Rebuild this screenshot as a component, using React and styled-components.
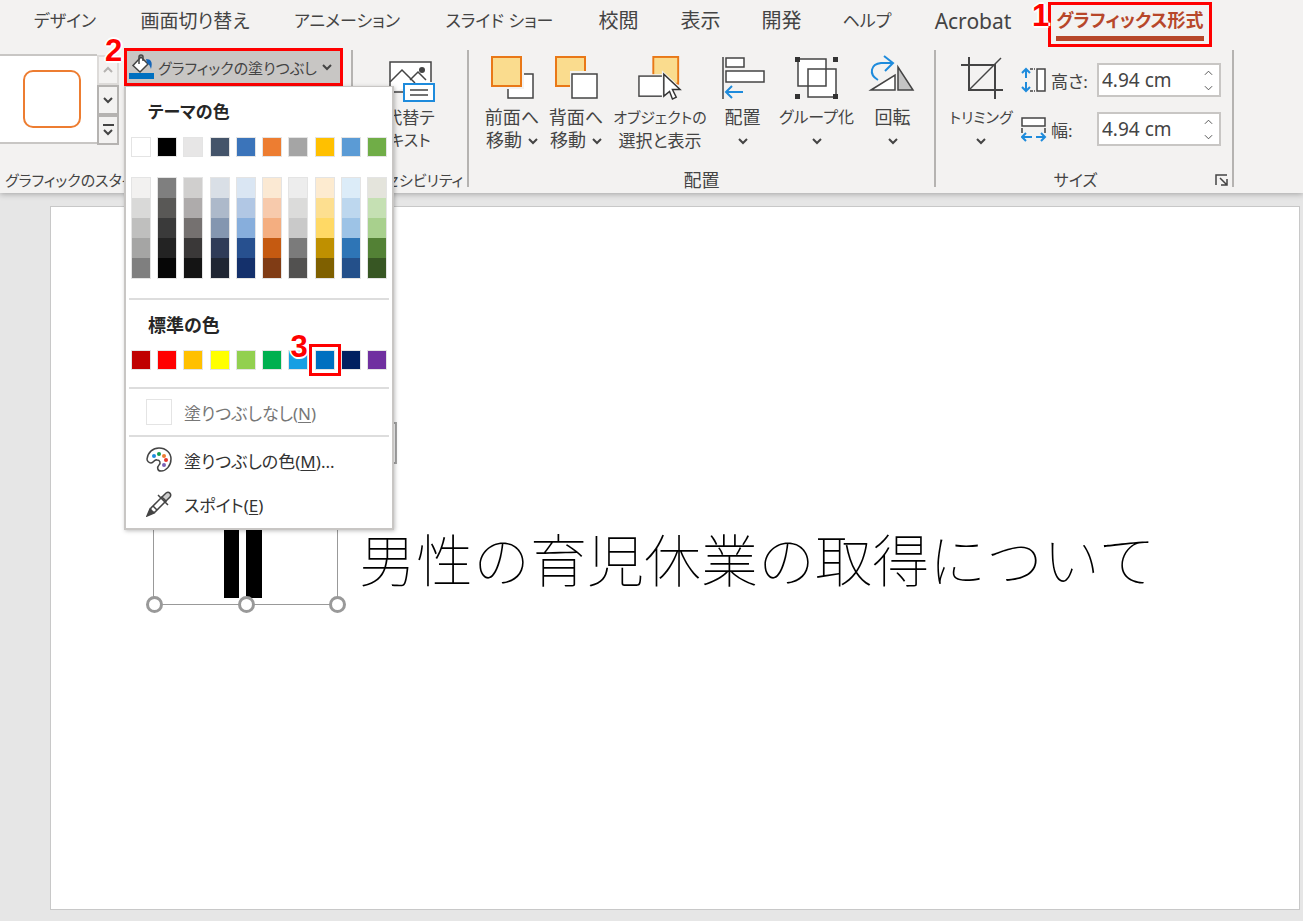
import React from 'react';
import styled, { createGlobalStyle } from 'styled-components';

const colors = {
  ribbon: '#f3f2f1',
  backdrop: '#e6e6e6',
  text: '#444444',
  line: '#b5b3b1',
  border: '#c8c6c4',
  accent: '#b7472a',
  blue: '#1e8bdc',
  mark: '#ff0000',
};

const tabs = [
  { label: 'デザイン', width: 106, size: 17 },
  { label: '画面切り替え', width: 154, size: 19 },
  { label: 'アニメーション', width: 150, size: 17 },
  { label: 'スライド ショー', width: 155, size: 17 },
  { label: '校閲', width: 83, size: 20 },
  { label: '表示', width: 81, size: 20 },
  { label: '開発', width: 81, size: 20 },
  { label: 'ヘルプ', width: 90, size: 17 },
  { label: 'Acrobat', width: 122 },
];

const themeColors = [
  ['#ffffff', '#f2f1f0', '#d9d9d8', '#bfbfbe', '#a5a5a4', '#7f7f7f'],
  ['#000000', '#7f7f7f', '#595856', '#3a3a3a', '#232323', '#060606'],
  ['#e7e6e6', '#d0cfce', '#aeabab', '#757170', '#3a3838', '#141414'],
  ['#44546a', '#d9dfe6', '#adb9ca', '#8496b0', '#2f3b57', '#1f2532'],
  ['#3b74ba', '#dae6f3', '#b1c7e4', '#87aedc', '#27508f', '#14306b'],
  ['#ed7d31', '#fbe9d3', '#f7caac', '#f4ae80', '#c55a11', '#803c15'],
  ['#a5a5a5', '#ededed', '#dbdbda', '#c9c9c9', '#7b7b7b', '#525150'],
  ['#ffc000', '#fdebd0', '#fddf90', '#ffd965', '#bf9000', '#7f6000'],
  ['#5b9bd5', '#dcecf8', '#bdd7ee', '#9dc3e6', '#2e75b6', '#24508a'],
  ['#70ad47', '#e4e4dc', '#c5e0b3', '#a8d08d', '#538135', '#375623'],
];

const standardColors = [
  '#c00000', '#ff0000', '#ffc000', '#ffff00', '#92d050',
  '#00b050', '#169fe3', '#0070c0', '#002060', '#7030a0',
];

const Chevron = ({ up }) => (
  <svg width="10" height="8" viewBox="0 0 10 8" fill="none" stroke="currentColor" strokeWidth="2">
    <path d={up ? 'M1 6l4-4 4 4' : 'M1 2l4 4 4-4'} />
  </svg>
);

const BucketIcon = () => (
  <svg width="26" height="26" viewBox="0 0 26 26" fill="none">
    <path d="M12 3L4 11.500l7 6.500 8-8z" fill="#fff" stroke="#444" strokeWidth="1.500" />
    <path d="M10 10V3a2 2 0 0 1 4 0v4" stroke="#444" strokeWidth="1.500" />
    <path d="M17 5c5 0 7 3 5 10-1-3-2-5-4-6z" fill="#1565b8" />
    <rect y="19" width="25" height="6" fill="#0070c0" />
  </svg>
);

const AltTextIcon = () => (
  <svg width="46" height="44" viewBox="0 0 46 44" fill="none" stroke="#444" strokeWidth="1.500">
    <path d="M3 36V6h41v20" fill="#fff" />
    <path d="M3 26l12-12 13 13M23 24l8-8 8 8M3 36h13" />
    <circle cx="35" cy="14" r="3" fill="#444" stroke="none" />
    <rect x="17" y="28" width="30" height="17" fill="#fff" stroke={colors.blue} strokeWidth="2" />
    <path d="M23 34h18M23 39h18" />
  </svg>
);

const BringForwardIcon = () => (
  <svg width="44" height="44" viewBox="0 0 44 44">
    <rect x="18" y="18" width="25" height="24" fill="#fff" stroke="#444" strokeWidth="1.500" />
    <rect x="0" y="0" width="34" height="33" fill={colors.ribbon} />
    <rect x="2" y="1" width="29" height="29" fill="#fadc8e" stroke="#e97817" strokeWidth="2" />
  </svg>
);

const SendBackwardIcon = () => (
  <svg width="44" height="44" viewBox="0 0 44 44">
    <rect x="2" y="1" width="29" height="29" fill="#fadc8e" stroke="#e97817" strokeWidth="2" />
    <rect x="16" y="15" width="28" height="28" fill={colors.ribbon} />
    <rect x="18" y="18" width="25" height="24" fill="#fff" stroke="#444" strokeWidth="1.500" />
  </svg>
);

const SelectionIcon = () => (
  <svg width="46" height="46" viewBox="0 0 46 46">
    <rect x="16" y="1" width="26" height="28" fill="#fadc8e" stroke="#e97817" strokeWidth="2" />
    <rect x="0" y="19" width="27" height="25" fill={colors.ribbon} />
    <rect x="1" y="21" width="25" height="21" fill="#fff" stroke="#444" strokeWidth="1.500" />
    <path d="M25 15v30l7-5 3 7 8-3-4-8h9z" fill={colors.ribbon} />
    <path d="M27 19v23l6-5 3 8 4-2-4-8h8z" fill="#fff" stroke="#333" strokeWidth="1.500" />
  </svg>
);

const AlignIcon = () => (
  <svg width="44" height="44" viewBox="0 0 44 44" fill="none" stroke="#444" strokeWidth="1.500">
    <path d="M2 1v42" />
    <rect x="5" y="2" width="18" height="9" fill="#fff" />
    <rect x="5" y="15" width="38" height="11" fill="#fff" />
    <path d="M22 36H5M11 30l-6 6 6 6" stroke={colors.blue} strokeWidth="2" />
  </svg>
);

const GroupIcon = () => (
  <svg width="44" height="44" viewBox="0 0 44 44" fill="none" stroke="#444" strokeWidth="1.500">
    <rect x="3" y="3" width="28" height="27" fill="#fff" />
    <rect x="13" y="13" width="28" height="28" fill="#fff" />
    <path d="M13 30h18V13" />
    <path d="M0 1h5v5h-5zM38 1h5v5h-5zM0 38h5v5h-5zM38 38h5v5h-5z" fill="#333" stroke="none" />
  </svg>
);

const RotateIcon = () => (
  <svg width="46" height="44" viewBox="0 0 46 44" fill="none" stroke="#444" strokeWidth="1.500">
    <path d="M1 34L25 19v15z" fill="#fff" />
    <path d="M28 11v23h15z" fill="#c4c4c4" />
    <path d="M8 24C-2 18 1 8 11 7h12M14 0l9 7-8 8" stroke={colors.blue} strokeWidth="2" />
  </svg>
);

const CropIcon = () => (
  <svg width="44" height="44" viewBox="0 0 44 44" fill="none" stroke="#444" strokeWidth="2">
    <path d="M10 1v33h34M2 9h34v34" />
    <path d="M10 34L42 2" strokeWidth="1.500" />
  </svg>
);

const HeightIcon = () => (
  <svg width="26" height="26" viewBox="0 0 26 26" fill="none" stroke="#444" strokeWidth="1.500">
    <rect x="16" y="2" width="8" height="22" fill="#fff" />
    <path d="M9 2h5M9 24h5" strokeDasharray="3 1" />
    <path d="M5 2v9M5 15v9M1 6l4-4 4 4M1 20l4 4 4-4" stroke={colors.blue} strokeWidth="2" />
  </svg>
);

const WidthIcon = () => (
  <svg width="26" height="26" viewBox="0 0 26 26" fill="none" stroke="#444" strokeWidth="1.500">
    <rect x="1" y="2" width="23" height="8" fill="#fff" />
    <path d="M1 12v5M24 12v5" />
    <path d="M2 21h9M15 21h9M5 17l-4 4 4 4M20 17l4 4-4 4" stroke={colors.blue} strokeWidth="2" />
  </svg>
);

const LauncherIcon = () => (
  <svg width="14" height="14" viewBox="0 0 14 14" fill="none" stroke="#444" strokeWidth="1.500">
    <path d="M1 12V2h11M5 5l7 7M12 6v6H6" />
  </svg>
);

const PaletteIcon = () => (
  <svg width="26" height="26" viewBox="0 0 26 26" fill="none">
    <path
      d="M1 12C2 5 7 1 13 1c7 0 12 5 12 11 0 7-5 12-10 12-4 0-4-4-2-6s1-5-2-5c-3-1-3 3-6 3-2 0-4-2-4-4z"
      fill="#fff"
      stroke="#444"
      strokeWidth="1.500"
    />
    <circle cx="8" cy="9" r="2" fill="#1e8bdc" />
    <circle cx="13" cy="7" r="2" fill="#14a052" />
    <circle cx="18" cy="9" r="2" fill="#ed7d31" />
    <circle cx="20" cy="13" r="2" fill="#e8352b" />
    <circle cx="18" cy="18" r="2" fill="#7b62b5" />
  </svg>
);

const EyedropperIcon = () => (
  <svg width="26" height="26" viewBox="0 0 26 26" fill="none" stroke="#444" strokeWidth="1.500">
    <path d="M3 23l2-6L16 6l4 4L9 21z" fill="#fff" />
    <path d="M16 6l4-4c3-2 6 1 4 4l-4 4z" fill="#ccc" />
    <path d="M12 4l10 10M7 15l4 4" />
    <path d="M1 25l3-7 4 4z" fill="#444" />
  </svg>
);

const arrangeButtons = [
  { lines: ['前面へ', '移動'], width: 64, Icon: BringForwardIcon },
  { lines: ['背面へ', '移動'], width: 64, Icon: SendBackwardIcon },
  { lines: ['オブジェクトの', '選択と表示'], sizes: [15, 17], plain: true, width: 104, Icon: SelectionIcon },
  { lines: ['配置'], width: 61, Icon: AlignIcon },
  { lines: ['グループ化'], sizes: [16], width: 87, Icon: GroupIcon },
  { lines: ['回転'], width: 65, Icon: RotateIcon },
];

const LargeCommand = ({ lines, sizes = [], plain, width, Icon }) => (
  <LargeButton type="button" $width={width}>
    <Icon />
    <CommandText>
      <CommandLine $size={sizes[0]}>{lines[0]}</CommandLine>
      <CommandLine $size={sizes[1]}>
        {lines[1]}
        {!plain && <Chevron />}
      </CommandLine>
    </CommandText>
  </LargeButton>
);

const SizeField = ({ id, label, Icon }) => (
  <>
    <FieldLabel htmlFor={id}>
      <Icon />
      {label}
    </FieldLabel>
    <Spinner>
      <SpinnerInput id={id} type="text" defaultValue="4.94 cm" />
      <SpinnerArrows>
        <SpinnerArrow type="button" aria-label={`${label} +`}><Chevron up /></SpinnerArrow>
        <SpinnerArrow type="button" aria-label={`${label} -`}><Chevron /></SpinnerArrow>
      </SpinnerArrows>
    </Spinner>
  </>
);

const FillMenu = () => (
  <Menu>
    <MenuHeading $size={17}>テーマの色</MenuHeading>
    <SwatchRow>
      {themeColors.map(([base]) => (
        <Swatch key={base} type="button" aria-label={base} $color={base} />
      ))}
    </SwatchRow>
    <ShadeRow>
      {themeColors.map(([base, ...shades]) => (
        <ShadeColumn key={base}>
          {shades.map(shade => (
            <Shade key={shade} type="button" aria-label={shade} $color={shade} />
          ))}
        </ShadeColumn>
      ))}
    </ShadeRow>
    <MenuRule />
    <MenuHeading>標準の色</MenuHeading>
    <StandardRow>
      {standardColors.map((color, index) => (
        <SwatchSlot key={color}>
          <Swatch type="button" aria-label={color} $color={color} />
          {index === 7 && <SwatchMark><StepNumber $left={-21} $top={-14}>3</StepNumber></SwatchMark>}
        </SwatchSlot>
      ))}
    </StandardRow>
    <MenuRule />
    <MenuItem type="button" $muted $height={46}>
      <EmptySwatch />
      <span>塗りつぶしなし(<u>N</u>)</span>
    </MenuItem>
    <MenuRule />
    <MenuItem type="button" $height={46}>
      <PaletteIcon />
      <span>塗りつぶしの色(<u>M</u>)...</span>
    </MenuItem>
    <MenuItem type="button" $height={42}>
      <EyedropperIcon />
      <span>スポイト(<u>E</u>)</span>
    </MenuItem>
  </Menu>
);

const App = () => (
  <Page>
    <GlobalStyle />
    <Ribbon>
      <TabBar>
        {tabs.map(({ label, width, size }) => (
          <Tab key={label} type="button" $width={width} $size={size}>{label}</Tab>
        ))}
        <TabMark>
          <StepNumber $left={-19} $top={-3}>1</StepNumber>
          <ActiveTab type="button" $width={148} $size={18}>グラフィックス形式</ActiveTab>
        </TabMark>
      </TabBar>
      <Groups>
        <Group $width={351}>
          <StyleTools>
            <Gallery><GalleryItem type="button" aria-label="スタイル" /></Gallery>
            <GalleryScroll>
              <ScrollButton type="button" aria-label="上へ" disabled><Chevron up /></ScrollButton>
              <ScrollButton type="button" aria-label="下へ"><Chevron /></ScrollButton>
              <ScrollButton type="button" aria-label="その他">
                <MoreBar />
                <Chevron />
              </ScrollButton>
            </GalleryScroll>
            <FillDropdown>
              <FillButton type="button">
                <BucketIcon />
                <FillLabel>グラフィックの塗りつぶし</FillLabel>
                <Chevron />
              </FillButton>
              <StepNumber $left={-19} $top={-11}>2</StepNumber>
              <FillMenu />
            </FillDropdown>
          </StyleTools>
          <GroupLabel $align="left" $size={15}>グラフィックのスタイル</GroupLabel>
        </Group>
        <Divider />
        <Group $width={114}>
          <CommandRow>
            <LargeCommand lines={['代替テ', 'キスト']} sizes={[17, 16]} plain width={114} Icon={AltTextIcon} />
          </CommandRow>
          <GroupLabel $align="right" $size={15}>アクセシビリティ</GroupLabel>
        </Group>
        <Divider />
        <Group $width={465}>
          <CommandRow $indent={11}>
            {arrangeButtons.map(button => <LargeCommand key={button.lines[0]} {...button} />)}
          </CommandRow>
          <GroupLabel>配置</GroupLabel>
        </Group>
        <Divider />
        <Group $width={296}>
          <CommandRow $indent={10}>
            <LargeCommand lines={['トリミング']} sizes={[15]} width={70} Icon={CropIcon} />
            <SizeGrid>
              <SizeField id="shape-height" label="高さ:" Icon={HeightIcon} />
              <SizeField id="shape-width" label="幅:" Icon={WidthIcon} />
            </SizeGrid>
          </CommandRow>
          <SizeFooter>
            <GroupLabel $size={16}>サイズ</GroupLabel>
            <Launcher type="button" aria-label="サイズと位置"><LauncherIcon /></Launcher>
          </SizeFooter>
        </Group>
        <Divider />
      </Groups>
    </Ribbon>
    <Workspace>
      <Slide>
        <PasteTag />
        <Selection>
          <Figure viewBox="0 0 183 183">
            <path d="M70 30h15v147h-15zM92 30h16v147h-16z" />
          </Figure>
          <Handle $x="0%" />
          <Handle $x="50%" />
          <Handle $x="100%" />
        </Selection>
        <SlideTitle>男性の育児休業の取得について</SlideTitle>
      </Slide>
    </Workspace>
  </Page>
);

const GlobalStyle = createGlobalStyle`
  * {
    box-sizing: border-box;
  }

  body {
    margin: 0;
    color: ${colors.text};
    font-family: "Noto Sans", "Noto Sans CJK JP", sans-serif;
    font-size: 18px;
    font-feature-settings: "palt";
  }

  button, input {
    margin: 0;
    padding: 0;
    border: 0;
    background: none;
    color: inherit;
    font: inherit;
    font-feature-settings: inherit;
  }

  svg {
    flex: none;
    display: block;
  }
`;

const Page = styled.div`
  display: flex;
  flex-direction: column;
  min-height: 100vh;
  overflow-x: hidden;
  background-color: ${colors.backdrop};
`;

const Ribbon = styled.header`
  position: relative;
  z-index: 1;
  padding-bottom: 3px;
  background-color: ${colors.ribbon};
  box-shadow: 0 1px 6px rgba(0, 0, 0, 0.3);
`;

const TabBar = styled.nav`
  display: flex;
  height: 48px;
  padding: 2px 0 0 12px;
`;

const Tab = styled.button`
  flex: none;
  width: ${props => props.$width}px;
  height: 38px;
  font-size: ${props => props.$size || 21}px;
  line-height: 38px;
  white-space: nowrap;
`;

const TabMark = styled.div`
  position: relative;
  height: 45px;
  margin-left: 14px;
  padding: 0 5px;
  border: 3px solid ${colors.mark};
`;

const ActiveTab = styled(Tab)`
  height: 36px;
  border-bottom: 5px solid ${colors.accent};
  color: ${colors.accent};
  font-weight: 700;
  line-height: 31px;
`;

const StepNumber = styled.span`
  position: absolute;
  left: ${props => props.$left}px;
  top: ${props => props.$top}px;
  color: ${colors.mark};
  font-family: "Liberation Sans", sans-serif;
  font-size: 31px;
  font-weight: 700;
  line-height: 28px;
  text-shadow: -2px 0 #fff, 2px 0 #fff, 0 -2px #fff, 0 2px #fff, 0 0 3px #fff;
`;

const Groups = styled.div`
  display: flex;
`;

const Group = styled.section`
  display: flex;
  flex: none;
  flex-direction: column;
  width: ${props => props.$width}px;
`;

const Divider = styled.div`
  flex: none;
  width: 2px;
  margin: 2px 0 3px;
  background-color: ${colors.line};
`;

const GroupLabel = styled.div`
  flex: 1;
  padding: 0 5px;
  font-size: ${props => props.$size || 18}px;
  line-height: 20px;
  text-align: ${props => props.$align || 'center'};
  white-space: nowrap;
`;

const StyleTools = styled.div`
  display: flex;
  align-items: flex-start;
  height: 122px;
`;

const Gallery = styled.div`
  display: flex;
  align-items: center;
  width: 97px;
  height: 90px;
  margin-top: 6px;
  padding-left: 23px;
  border: 1px solid ${colors.border};
  border-width: 2px 0;
  background-color: #fff;
`;

const GalleryItem = styled.button`
  width: 58px;
  height: 58px;
  border: 2px solid #ed7d31;
  border-radius: 10px;
`;

const GalleryScroll = styled.div`
  display: flex;
  flex-direction: column;
  width: 22px;
  margin: 7px 5px 0 0;
`;

const ScrollButton = styled.button`
  display: flex;
  flex-direction: column;
  align-items: center;
  justify-content: center;
  gap: 2px;
  height: 30px;
  border: 2px solid ${colors.line};

  &:disabled {
    border-color: #dddbd9;
    color: #b5b3b1;
  }
`;

const MoreBar = styled.span`
  width: 11px;
  height: 2px;
  background-color: currentColor;
`;

const FillDropdown = styled.div`
  position: relative;
`;

const FillButton = styled.button`
  display: flex;
  align-items: center;
  width: 219px;
  height: 38px;
  padding: 0 3px 0 2px;
  border: 3px solid ${colors.mark};
  background-color: ${colors.border};
  font-size: 15px;
  white-space: nowrap;
`;

const FillLabel = styled.span`
  margin: 0 5px 0 3px;
`;

const Menu = styled.div`
  position: absolute;
  top: 100%;
  left: 0;
  width: 270px;
  padding: 0 3px 3px;
  border: 2px solid ${colors.border};
  border-top-width: 1px;
  background-color: #fff;
  box-shadow: 1px 1px 4px rgba(0, 0, 0, 0.25);
`;

const MenuHeading = styled.h2`
  margin: 0;
  padding: 10px 0 10px 19px;
  color: #262626;
  font-size: ${props => props.$size || 18}px;
  font-weight: 700;
  line-height: 30px;
`;

const SwatchRow = styled.div`
  display: flex;
  justify-content: space-between;
  padding: 0 2px;
`;

const StandardRow = styled(SwatchRow)`
  margin-bottom: 17px;
`;

const Swatch = styled.button`
  display: block;
  width: 20px;
  height: 20px;
  border: 1px solid #e4e4e4;
  background-color: ${props => props.$color};
`;

const ShadeRow = styled(SwatchRow)`
  margin: 20px 0 19px;
`;

const ShadeColumn = styled.div`
  display: flex;
  flex-direction: column;
  width: 20px;
  border: 1px solid #e4e4e4;
`;

const Shade = styled.button`
  height: 20px;
  background-color: ${props => props.$color};
`;

const SwatchSlot = styled.div`
  position: relative;
`;

const SwatchMark = styled.div`
  position: absolute;
  inset: -6px;
  border: 3px solid ${colors.mark};
  pointer-events: none;
`;

const MenuRule = styled.hr`
  height: 2px;
  margin: 0;
  border: 0;
  background-color: #dddddd;
`;

const MenuItem = styled.button`
  display: flex;
  align-items: center;
  gap: 12px;
  width: 100%;
  height: ${props => props.$height}px;
  padding-left: 17px;
  color: ${props => props.$muted ? '#777777' : '#333333'};
  font-size: 17px;

  u {
    text-underline-offset: 2px;
  }
`;

const EmptySwatch = styled.span`
  width: 26px;
  height: 26px;
  border: 1px solid #e4e4e4;
`;

const CommandRow = styled.div`
  display: flex;
  height: 122px;
  padding: 8px 0 0 ${props => props.$indent || 0}px;
`;

const LargeButton = styled.button`
  display: flex;
  flex: none;
  flex-direction: column;
  align-items: center;
  gap: 6px;
  width: ${props => props.$width}px;

  > svg {
    height: 44px;
    overflow: visible;
  }
`;

const CommandText = styled.span`
  display: flex;
  flex-direction: column;
  align-items: center;
  white-space: nowrap;
`;

const CommandLine = styled.span`
  display: flex;
  align-items: center;
  gap: 6px;
  height: 23px;
  font-size: ${props => props.$size || 18}px;
  line-height: 23px;
`;

const SizeGrid = styled.div`
  display: grid;
  grid-template-columns: 68px 124px;
  grid-auto-rows: 34px;
  gap: 15px 8px;
  margin-left: 5px;
  padding-top: 7px;
`;

const FieldLabel = styled.label`
  display: flex;
  align-items: center;
  gap: 4px;
  font-size: 17px;
  white-space: nowrap;
`;

const Spinner = styled.div`
  display: flex;
  border: 2px solid ${colors.border};
  background-color: #fff;
`;

const SpinnerInput = styled.input`
  flex: 1;
  min-width: 0;
  padding-left: 3px;
  font-size: 19px;
  outline: none;
`;

const SpinnerArrows = styled.div`
  display: flex;
  flex-direction: column;
  width: 22px;
`;

const SpinnerArrow = styled.button`
  display: flex;
  flex: 1;
  align-items: center;
  justify-content: center;

  svg {
    width: 9px;
    stroke-width: 1;
  }
`;

const SizeFooter = styled.div`
  display: flex;
  align-items: center;
  padding-right: 3px;
`;

const Launcher = styled.button`
  width: 14px;
  height: 14px;
`;

const Workspace = styled.main`
  display: flex;
  flex: 1;
  padding: 13px 3px 11px 50px;
`;

const Slide = styled.article`
  position: relative;
  flex: 1;
  border: 1px solid #c8c8c8;
  background-color: #fff;
`;

const Selection = styled.div`
  position: absolute;
  left: 102px;
  top: 213px;
  width: 185px;
  height: 185px;
  border: 1px solid #999999;
`;

const Figure = styled.svg`
  width: 100%;
  height: 100%;
`;

const Handle = styled.span`
  position: absolute;
  left: ${props => props.$x};
  top: 100%;
  width: 17px;
  height: 17px;
  margin: -8px;
  border: 3px solid #999999;
  border-radius: 50%;
  background-color: #fff;
`;

const PasteTag = styled.div`
  position: absolute;
  left: 304px;
  top: 215px;
  width: 42px;
  height: 42px;
  border: 2px solid #a6a6a6;
`;

const SlideTitle = styled.h1`
  position: absolute;
  left: 308px;
  top: 314px;
  margin: 0;
  color: #000;
  font-family: "Noto Sans CJK JP", sans-serif;
  font-feature-settings: normal;
  font-size: 57px;
  font-weight: 100;
  line-height: 72px;
  white-space: nowrap;
`;

export default App;
